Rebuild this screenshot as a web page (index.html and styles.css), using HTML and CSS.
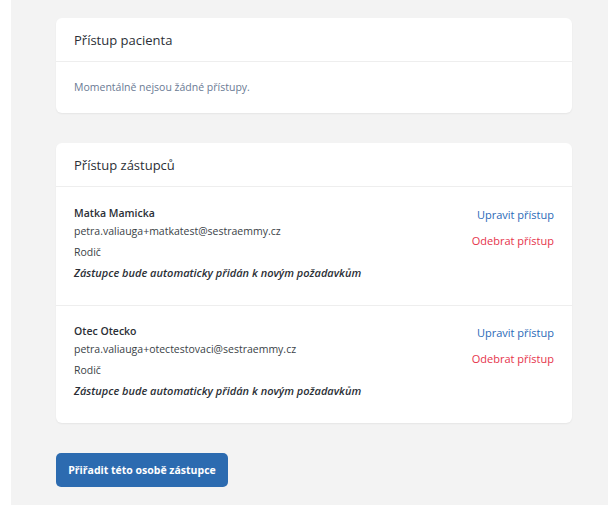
FILE: index.html
```html
<!DOCTYPE html>
<html lang="cs">
<head>
<meta charset="utf-8">
<link rel="stylesheet" href="styles.css">
</head>
<body>
<main class="page">
  <section class="card">
    <header class="card-head">Přístup pacienta</header>
    <div class="card-body empty">Momentálně nejsou žádné přístupy.</div>
  </section>

  <section class="card">
    <header class="card-head">Přístup zástupců</header>
    <div class="item">
      <div class="info">
        <div class="name">Matka Mamicka</div>
        <div class="line email">petra.valiauga+matkatest@sestraemmy.cz</div>
        <div class="line role">Rodič</div>
        <div class="note">Zástupce bude automaticky přidán k novým požadavkům</div>
      </div>
      <div class="actions">
        <a class="link edit">Upravit přístup</a>
        <a class="link remove">Odebrat přístup</a>
      </div>
    </div>
    <div class="item">
      <div class="info">
        <div class="name">Otec Otecko</div>
        <div class="line email">petra.valiauga+otectestovaci@sestraemmy.cz</div>
        <div class="line role">Rodič</div>
        <div class="note">Zástupce bude automaticky přidán k novým požadavkům</div>
      </div>
      <div class="actions">
        <a class="link edit">Upravit přístup</a>
        <a class="link remove">Odebrat přístup</a>
      </div>
    </div>
  </section>

  <button class="btn">Přiřadit této osobě zástupce</button>
</main>
</body>
</html>
```
FILE: styles.css
```css
html, body {
  margin: 0;
  padding: 0;
  background: #ffffff;
  height: 100%;
}
body {
  font-family: "Open Sans", "Noto Sans", sans-serif;
  color: #2b2f36;
}
.page {
  margin-left: 11px;
  min-height: 100%;
  box-sizing: border-box;
  background: #f3f3f3;
  padding: 18px 36px 20px 45px;
  display: flex;
  flex-direction: column;
  align-items: flex-start;
  gap: 30px;
}
.card {
  width: 516px;
  background: #fff;
  border-radius: 6px;
  box-shadow: 0 1px 2px rgba(0,0,0,0.06);
}
.card-head {
  height: 44px;
  box-sizing: border-box;
  padding: 0 18px;
  display: flex;
  align-items: center;
  font-size: 13px;
  color: #2b2f36;
  border-bottom: 1px solid #eeeeee;
}
.card-body.empty {
  padding: 17px 18px 18px;
  font-size: 10.5px;
  color: #6a7a94;
  line-height: 16px;
}
.item {
  display: flex;
  justify-content: space-between;
  padding: 18px 18px 24px;
}
.item + .item {
  border-top: 1px solid #eeeeee;
  padding-top: 17px;
}
.info {
  display: flex;
  flex-direction: column;
  font-size: 10.5px;
  line-height: 16px;
}
.name {
  font-weight: 600;
  color: #2b2f36;
}
.line {
  color: #3a3f47;
}
.email { margin-top: 2px; }
.role { margin-top: 5px; }
.note {
  font-style: italic;
  font-weight: 600;
  font-size: 11px;
  color: #2b2f36;
  margin-top: 5px;
}
.actions {
  display: flex;
  flex-direction: column;
  align-items: flex-end;
  gap: 10px;
  font-size: 11px;
  line-height: 16px;
  padding-top: 2px;
}
.link {
  cursor: pointer;
}
.edit { color: #2a6ab8; }
.remove { color: #e6334b; }
.btn {
  height: 34px;
  width: 172px;
  border: 0;
  border-radius: 5px;
  background: #2c6bb0;
  color: #fff;
  font-family: "Open Sans", "Noto Sans", sans-serif;
  font-weight: 700;
  font-size: 10.5px;
  padding: 0;
}
```
